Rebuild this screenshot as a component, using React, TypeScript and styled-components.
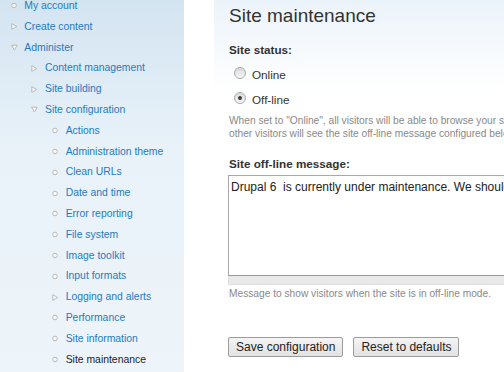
import React from 'react';
import styled, {createGlobalStyle} from 'styled-components';

const GlobalStyle = createGlobalStyle`
  html, body {
    margin: 0;
    padding: 0;
    overflow: hidden;
    background: #fff;
  }
  body {
    font-family: "Liberation Sans", Arial, sans-serif;
    color: #494949;
  }
`

type Kind = 'leaf' | 'collapsed' | 'expanded'

type MenuNode = {
    title: string
    kind: Kind
    active?: boolean
    children?: MenuNode[]
}

const menu: MenuNode[] = [
    {title: 'My account', kind: 'leaf'},
    {title: 'Create content', kind: 'collapsed'},
    {
        title: 'Administer', kind: 'expanded', children: [
            {title: 'Content management', kind: 'collapsed'},
            {title: 'Site building', kind: 'collapsed'},
            {
                title: 'Site configuration', kind: 'expanded', children: [
                    {title: 'Actions', kind: 'leaf'},
                    {title: 'Administration theme', kind: 'leaf'},
                    {title: 'Clean URLs', kind: 'leaf'},
                    {title: 'Date and time', kind: 'leaf'},
                    {title: 'Error reporting', kind: 'leaf'},
                    {title: 'File system', kind: 'leaf'},
                    {title: 'Image toolkit', kind: 'leaf'},
                    {title: 'Input formats', kind: 'leaf'},
                    {title: 'Logging and alerts', kind: 'collapsed'},
                    {title: 'Performance', kind: 'leaf'},
                    {title: 'Site information', kind: 'leaf'},
                    {title: 'Site maintenance', kind: 'leaf', active: true},
                ]
            },
        ]
    },
]

// garland-style menu bullets: hollow dot, hollow triangles
const MenuIcon = ({kind}: { kind: Kind }) => (
    <IconBox width="7" height="7" viewBox="0 0 7 7">
        {kind === 'leaf' && <circle cx="3" cy="3.5" r="2.3" fill="#fafafa" stroke="#b9b9b9" strokeWidth="1"/>}
        {kind === 'collapsed' && <polygon points="0.8,0.7 5.8,3.5 0.8,6.3" fill="#fafafa" stroke="#b9b9b9" strokeWidth="1" strokeLinejoin="round"/>}
        {kind === 'expanded' && <polygon points="0.6,1.2 6.2,1.2 3.4,6" fill="#fafafa" stroke="#b9b9b9" strokeWidth="1" strokeLinejoin="round"/>}
    </IconBox>
)

const MenuTree = ({items, nested}: { items: MenuNode[], nested?: boolean }) => (
    <MenuList $nested={nested}>
        {items.map(item => (
            <li key={item.title}>
                <MenuRow>
                    <MenuIcon kind={item.kind}/>
                    <MenuLink href="#" $active={item.active}>{item.title}</MenuLink>
                </MenuRow>
                {item.children && <MenuTree items={item.children} nested/>}
            </li>
        ))}
    </MenuList>
)

export default function App() {
    return (
        <Page>
            <GlobalStyle/>
            <Sidebar>
                <MenuTree items={menu}/>
            </Sidebar>
            <Main>
                <Title>Site maintenance</Title>
                <FieldLabel>Site status:</FieldLabel>
                <RadioRow>
                    <Radio/>
                    <span>Online</span>
                </RadioRow>
                <RadioRow>
                    <Radio $checked/>
                    <span>Off-line</span>
                </RadioRow>
                <Description>
                    When set to "Online", all visitors will be able to browse your site normally. When set to "Off-line", only users with the "administer site configuration" permission will be able to access your site to perform maintenance; all<br/>
                    other visitors will see the site off-line message configured below. Authorized users can log in during "Off-line" mode directly via the user login page.
                </Description>
                <MessageLabel>Site off-line message:</MessageLabel>
                <MessageArea
                    readOnly
                    defaultValue="Drupal 6  is currently under maintenance. We should be back shortly. Thank you for your patience."
                />
                <Grippie/>
                <Description $tight>Message to show visitors when the site is in off-line mode.</Description>
                <Buttons>
                    <Button>Save configuration</Button>
                    <Button>Reset to defaults</Button>
                </Buttons>
            </Main>
        </Page>
    );
}

const Page = styled.div`
  display: flex;
  height: 372px;
  width: 504px;
  overflow: hidden;
`

const Sidebar = styled.div`
  width: 184px;
  flex-shrink: 0;
  background: linear-gradient(to bottom, #d3e4f1 0, #e9f2f9 150px, #edf4fa 100%);
  overflow: hidden;
`

const MenuList = styled.ul<{ $nested?: boolean }>`
  list-style: none;
  margin: ${p => p.$nested ? '0' : '-4px 0 0'};
  padding: 0 0 0 ${p => p.$nested ? '20.7px' : '10.5px'};
`

const MenuRow = styled.div`
  display: flex;
  align-items: center;
  height: 20.8px;
  white-space: nowrap;
`

const IconBox = styled.svg`
  flex-shrink: 0;
  margin: -1px 6.8px 0 0;
`

const MenuLink = styled.a<{ $active?: boolean }>`
  font-size: 10.4px;
  line-height: 20.8px;
  text-decoration: none;
  color: ${p => p.$active ? '#1c1c1c' : '#1f7ac4'};
`

const Main = styled.div`
  flex: 1;
  min-width: 0;
  margin-left: 30px;
  padding-left: 15px;
  overflow: hidden;
  background: linear-gradient(to bottom, #ebf3fa 0, #ffffff 90px);
`

const Title = styled.h2`
  margin: 0;
  padding-top: 4px;
  font-size: 19px;
  line-height: 24px;
  font-weight: normal;
  color: #333;
  white-space: nowrap;
`

const FieldLabel = styled.div`
  margin-top: 14.2px;
  font-size: 11.7px;
  line-height: 16px;
  font-weight: bold;
  color: #333;
`

const MessageLabel = styled(FieldLabel)`
  margin-top: 16.2px;
`

const RadioRow = styled.label`
  display: flex;
  align-items: flex-start;
  margin-top: 9px;
  padding-left: 5px;
  font-size: 11.7px;
  line-height: 16px;
  color: #333;
`

const Radio = styled.span<{ $checked?: boolean }>`
  position: relative;
  box-sizing: border-box;
  width: 12px;
  height: 12px;
  margin: 0 6px 0 0;
  border-radius: 50%;
  border: 1px solid #a9a9a9;
  background: linear-gradient(to bottom, #d9d9d9, #f7f7f7);

  &::after {
    content: '';
    display: ${p => p.$checked ? 'block' : 'none'};
    position: absolute;
    left: 3px;
    top: 3px;
    width: 4px;
    height: 4px;
    border-radius: 50%;
    background: #3c3c3c;
  }
`

const Description = styled.div<{ $tight?: boolean }>`
  margin-top: ${p => p.$tight ? '2px' : '6px'};
  font-size: 10.2px;
  line-height: 13px;
  color: #898989;
  white-space: nowrap;
`

const MessageArea = styled.textarea`
  display: block;
  box-sizing: border-box;
  width: 600px;
  height: 101px;
  margin: 3px 0 0 -1px;
  padding: 4px 2px 2px;
  border: 1px solid #a8a8a8;
  border-bottom-color: #999;
  font-family: "Liberation Sans", Arial, sans-serif;
  font-size: 12px;
  line-height: 14px;
  color: #222;
  background: #fff;
  resize: none;
  outline: none;
`

const Grippie = styled.div`
  box-sizing: border-box;
  width: 600px;
  height: 9px;
  margin-left: -1px;
  background: #e9e9e9;
  border: 1px solid #dedede;
  border-top: 0;
`

const Buttons = styled.div`
  display: flex;
  gap: 10px;
  margin: 37px 0 0 -1px;
`

const Button = styled.button`
  box-sizing: border-box;
  height: 20px;
  padding: 2px 7px;
  border: 1px solid #9c9c9c;
  border-radius: 2px;
  background: linear-gradient(to bottom, #f4f4f4, #e2e2e2);
  font-family: "Liberation Sans", Arial, sans-serif;
  font-size: 12px;
  line-height: 14px;
  color: #222;
  white-space: nowrap;
`
